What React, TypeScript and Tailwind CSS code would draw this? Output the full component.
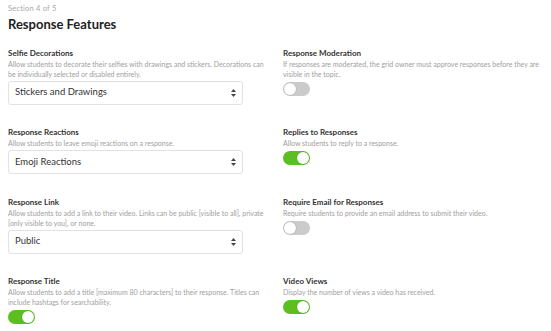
import React, { useState } from 'react';

type Opt = { title: string; desc: string[]; kind: 'select' | 'toggle'; value?: string; on?: boolean };

// descriptions are split where the original wraps them
const left: Opt[] = [
  {
    title: 'Selfie Decorations',
    desc: ['Allow students to decorate their selfies with drawings and stickers. Decorations can', 'be individually selected or disabled entirely.'],
    kind: 'select',
    value: 'Stickers and Drawings',
  },
  { title: 'Response Reactions', desc: ['Allow students to leave emoji reactions on a response.'], kind: 'select', value: 'Emoji Reactions' },
  {
    title: 'Response Link',
    desc: ['Allow students to add a link to their video. Links can be public [visible to all], private', '[only visible to you], or none.'],
    kind: 'select',
    value: 'Public',
  },
  {
    title: 'Response Title',
    desc: ['Allow students to add a title [maximum 80 characters] to their response. Titles can', 'include hashtags for searchability.'],
    kind: 'toggle',
    on: true,
  },
];

const right: Opt[] = [
  {
    title: 'Response Moderation',
    desc: ['If responses are moderated, the grid owner must approve responses before they are', 'visible in the topic.'],
    kind: 'toggle',
    on: false,
  },
  { title: 'Replies to Responses', desc: ['Allow students to reply to a response.'], kind: 'toggle', on: true },
  { title: 'Require Email for Responses', desc: ['Require students to provide an email address to submit their video.'], kind: 'toggle', on: false },
  { title: 'Video Views', desc: ['Display the number of views a video has received.'], kind: 'toggle', on: true },
];

function Toggle({ initial }: { initial: boolean }) {
  const [on, setOn] = useState(initial);
  return (
    <button
      type="button"
      onClick={() => setOn(!on)}
      className={`mt-[3px] flex h-[14px] w-[27px] items-center rounded-full p-[1px] ${on ? 'justify-end bg-[#5cbf1f]' : 'justify-start bg-[#cbcbcb]'}`}
    >
      <span className="block h-[12px] w-[12px] rounded-full bg-white shadow-[0_0_0_0.5px_rgba(0,0,0,0.15)]" />
    </button>
  );
}

function SelectBox({ value }: { value: string }) {
  return (
    <div className="mt-[2px] flex h-[24px] w-[235px] items-center justify-between rounded-[3px] border border-[#e2e2e2] bg-white pl-[6px] pr-[6px]">
      <span className="text-[9.5px] text-[#333]">{value}</span>
      <svg width="5" height="8" viewBox="0 0 5 8" className="fill-[#444]">
        <path d="M2.5 0L5 3H0z" />
        <path d="M2.5 8L5 5H0z" />
      </svg>
    </div>
  );
}

function Field({ o }: { o: Opt }) {
  return (
    <div>
      <div className="text-[8px] font-bold leading-[11px] text-[#333]">{o.title}</div>
      <p className="text-[7px] leading-[10px] text-[#a0a0a0]">
        {o.desc.map((line) => (
          <span key={line} className="block whitespace-nowrap">
            {line}
          </span>
        ))}
      </p>
      {o.kind === 'select' ? <SelectBox value={o.value || ''} /> : <Toggle initial={!!o.on} />}
    </div>
  );
}

export default function App() {
  return (
    <div className="min-h-[331px] bg-white px-[8px] pt-[4px] font-['Lato',sans-serif]">
      <div className="text-[7.5px] leading-[9px] tracking-[0.2px] text-[#a8a8a8]">Section 4 of 5</div>
      <h1 className="mt-[2.5px] text-[13px] font-bold leading-[16px] text-[#222]">Response Features</h1>

      <div className="mt-[16px] grid grid-cols-[257px_1fr] gap-x-[18px] gap-y-[22.5px]">
        {left.map((o, i) => (
          <React.Fragment key={o.title}>
            <Field o={o} />
            <Field o={right[i]} />
          </React.Fragment>
        ))}
      </div>
    </div>
  );
}
